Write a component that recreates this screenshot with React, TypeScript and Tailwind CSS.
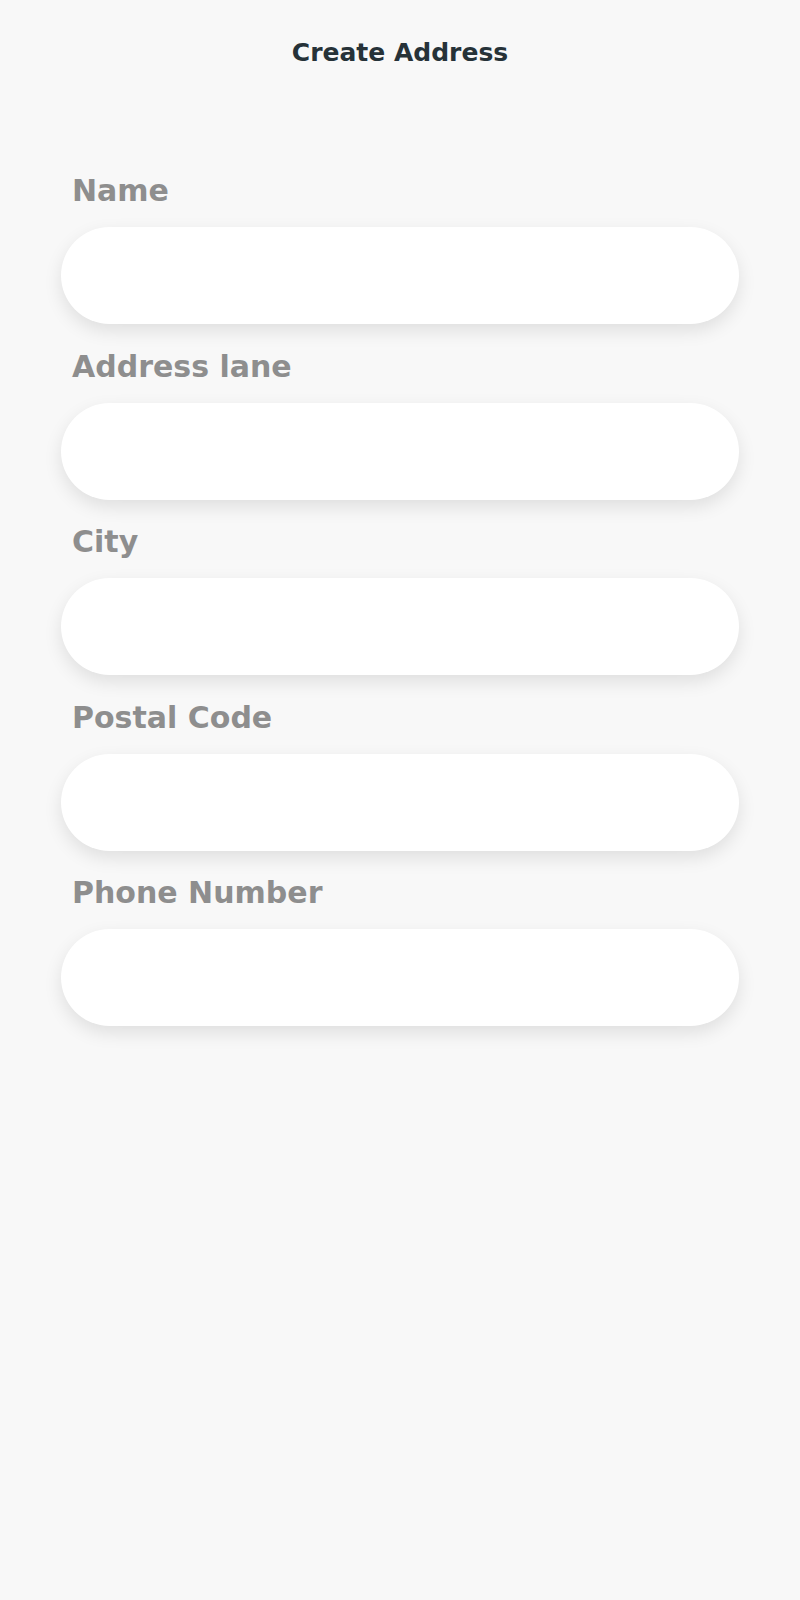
const fields = ['Name', 'Address lane', 'City', 'Postal Code', 'Phone Number'];

export default function App() {
  return (
    <main className="min-h-[1600px] w-full bg-[#f8f8f8] font-['DejaVu_Sans',sans-serif]">
      <header className="pt-[38px] text-center">
        <h1 className="text-[25px] leading-[30px] font-bold text-[#263238]">Create Address</h1>
      </header>

      <form className="mt-[105px] flex flex-col gap-[24.5px] px-[61px]">
        {fields.map((label) => (
          <div key={label} className="flex flex-col">
            <label className="mb-[18px] pl-[11px] text-[30px] leading-[36px] font-bold text-[#8e8e8e]">
              {label}
            </label>
            <input
              type="text"
              className="h-[97px] w-full rounded-full bg-white px-8 text-[28px] text-[#263238] shadow-[0_7px_18px_rgba(0,0,0,0.1)] outline-none"
            />
          </div>
        ))}
      </form>
    </main>
  );
}
